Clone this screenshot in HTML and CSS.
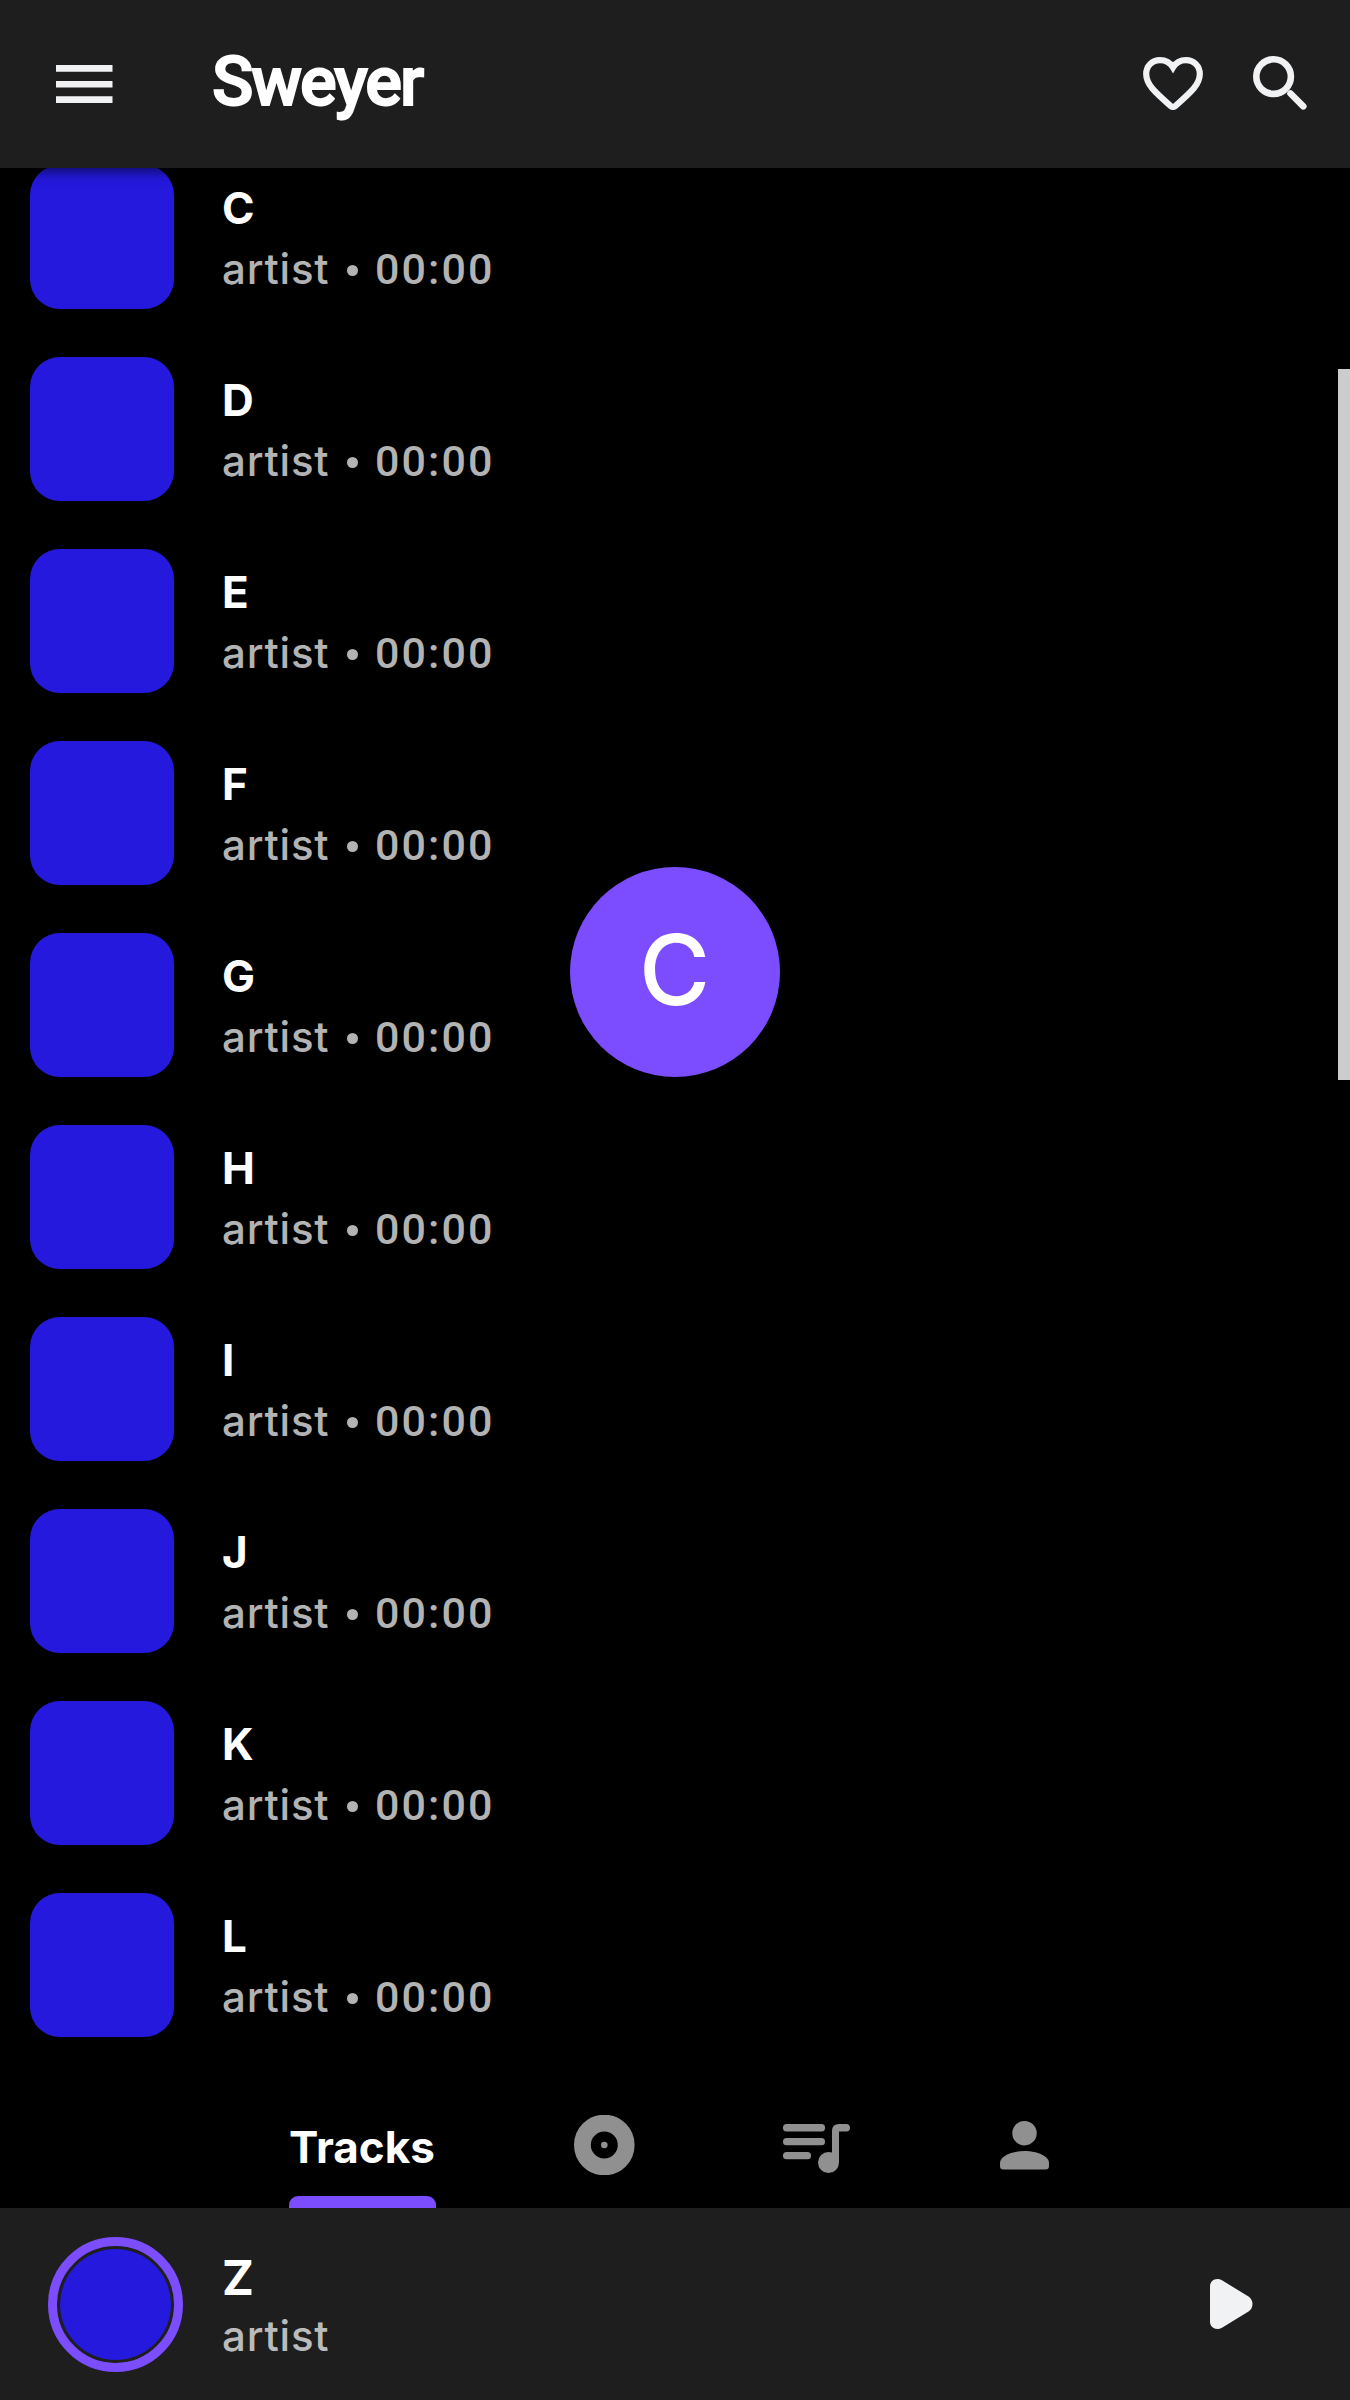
FILE: index.html
```
<!DOCTYPE html>
<html lang="en">
<head>
<meta charset="utf-8">
<title>Sweyer</title>
<link rel="stylesheet" href="styles.css">
</head>
<body>
<div class="app">
  <header class="appbar">
    <svg class="menu" viewBox="0 0 58 40" aria-label="Menu"><path d="M0 1h56.5v6.7H0zM0 17h56.5v6.4H0zM0 32.3h56.5V39H0z"/></svg>
    <h1 class="title">Sweyer</h1>
    <svg class="heart" viewBox="0 0 60 53" aria-label="Favorites"><path d="M30 10.5C27.3 6 22.5 3.200 17 3.200C9 3.200 3.200 9.200 3.200 17C3.200 27 11 34.500 27.500 48.800Q30 50.900 32.500 48.800C49 34.500 56.800 27 56.800 17C56.800 9.200 51 3.200 43 3.200C37.500 3.200 32.700 6 30 10.500Z"/></svg>
    <svg class="search" viewBox="0 0 54 54" aria-label="Search"><circle cx="20.600" cy="20.600" r="17.300"/><path d="M37.500 37.500L50.300 50.300"/></svg>
  </header>
  <main class="list">
    <ul class="tracks">
      <li class="track"><span class="art"></span><div class="info"><b class="name">C</b><span class="sub"><span class="artist">artist</span><i class="dot"></i><span class="time">00:00</span></span></div></li>
      <li class="track"><span class="art"></span><div class="info"><b class="name">D</b><span class="sub"><span class="artist">artist</span><i class="dot"></i><span class="time">00:00</span></span></div></li>
      <li class="track"><span class="art"></span><div class="info"><b class="name">E</b><span class="sub"><span class="artist">artist</span><i class="dot"></i><span class="time">00:00</span></span></div></li>
      <li class="track"><span class="art"></span><div class="info"><b class="name">F</b><span class="sub"><span class="artist">artist</span><i class="dot"></i><span class="time">00:00</span></span></div></li>
      <li class="track"><span class="art"></span><div class="info"><b class="name">G</b><span class="sub"><span class="artist">artist</span><i class="dot"></i><span class="time">00:00</span></span></div></li>
      <li class="track"><span class="art"></span><div class="info"><b class="name">H</b><span class="sub"><span class="artist">artist</span><i class="dot"></i><span class="time">00:00</span></span></div></li>
      <li class="track"><span class="art"></span><div class="info"><b class="name">I</b><span class="sub"><span class="artist">artist</span><i class="dot"></i><span class="time">00:00</span></span></div></li>
      <li class="track"><span class="art"></span><div class="info"><b class="name">J</b><span class="sub"><span class="artist">artist</span><i class="dot"></i><span class="time">00:00</span></span></div></li>
      <li class="track"><span class="art"></span><div class="info"><b class="name">K</b><span class="sub"><span class="artist">artist</span><i class="dot"></i><span class="time">00:00</span></span></div></li>
      <li class="track"><span class="art"></span><div class="info"><b class="name">L</b><span class="sub"><span class="artist">artist</span><i class="dot"></i><span class="time">00:00</span></span></div></li>
    </ul>
    <div class="scrollbar"></div>
    <div class="bubble">C</div>
  </main>
  <nav class="tabs">
    <div class="tab"><span class="tab-label">Tracks</span><span class="indicator"></span></div>
    <svg class="disc" viewBox="0 0 61 60" aria-label="Albums"><circle class="ring" cx="30.300" cy="30" r="21.900"/><circle cx="30.300" cy="30" r="3.300"/></svg>
    <svg class="queue" viewBox="0 0 67 49" aria-label="Playlists"><rect width="42" height="7.600" rx="3.500"/><rect y="14" width="42" height="7.300" rx="3.500"/><rect y="28" width="28" height="7.200" rx="3.500"/><path d="M49 28.500V7Q49 0 56 0H63.200A3.800 3.800 0 0 1 63.200 7.600H56V38.500A10.500 10.500 0 1 1 45.500 28Q47.500 28 49 28.500Z"/></svg>
    <svg class="person" viewBox="0 0 49 49" aria-label="Artists"><circle cx="24.500" cy="12.200" r="12.200"/><path d="M0 42C0 35 12 30 24.500 30S49 35 49 42V45Q49 48.500 45.500 48.500H3.500Q0 48.500 0 45Z"/></svg>
  </nav>
  <footer class="player">
    <div class="progress"><div class="cover"></div></div>
    <div class="now"><b class="now-name">Z</b><span class="now-artist">artist</span></div>
    <svg class="play" viewBox="0 0 43 50" aria-label="Play"><path d="M0 7.500C0 1 6.500-1.800 12 1.300L38.500 17.500Q42.500 20.500 42.500 25T38.500 32.500L12 48.700C6.500 51.800 0 49 0 42.500Z"/></svg>
  </footer>
</div>
</body>
</html>
```
FILE: styles.css
```
* { box-sizing: border-box; }
body { margin: 0; background: #000; }
svg { display: block; flex: none; }
.app {
  display: flex;
  flex-direction: column;
  width: 1350px;
  height: 2400px;
  overflow: hidden;
  color: #fff;
  font-family: Inter, "Liberation Sans", sans-serif;
}
.appbar {
  display: flex;
  align-items: flex-start;
  flex: none;
  height: 168px;
  padding-left: 56px;
  background: #1e1e1e;
  box-shadow: 0 3px 12px rgba(0, 0, 0, .6);
  z-index: 1;
}
.menu { width: 58px; height: 40px; margin-top: 64px; fill: #f1f2f4; }
.title {
  width: 240px;
  margin: 42px 0 0 98px;
  font: 500 68.5px/80px Roboto, sans-serif;
  letter-spacing: -2.1px;
  -webkit-text-stroke: 1.8px #fff;
}
.heart { width: 60px; height: 53px; margin: 57px 0 0 691px; fill: none; stroke: #f1f2f4; stroke-width: 6.2; }
.search { width: 54px; height: 54px; margin: 56px 0 0 49.600px; fill: none; stroke: #f1f2f4; stroke-width: 6.600; stroke-linecap: round; }
.list { position: relative; display: flow-root; flex: none; height: 1893px; }
.tracks { margin: -27px 0 0; padding: 0; list-style: none; }
.track { display: flex; align-items: center; height: 192px; padding-left: 30px; }
.art { width: 144px; height: 144px; border-radius: 30px; background: #2419dc; }
.info { display: flex; flex-direction: column; height: 144px; padding: 13px 0 0 48px; }
.name { height: 61px; font-size: 44px; line-height: 60px; font-weight: 650; }
.sub { display: flex; align-items: center; height: 60px; color: #b3b3b3; font-size: 42px; line-height: 60px; font-weight: 500; }
.artist { width: 125px; letter-spacing: .8px; }
.dot { width: 11px; height: 11px; margin-top: 2px; border-radius: 50%; background: currentColor; }
.time { margin-left: 17px; font-family: Roboto, sans-serif; font-size: 43px; letter-spacing: 2.1px; }
.scrollbar { position: absolute; right: 0; top: 201px; width: 12px; height: 711px; background: #ccc; }
.bubble {
  position: absolute;
  left: 570px;
  top: 699px;
  width: 210px;
  height: 210px;
  border-radius: 50%;
  background: #7c4dff;
  font-size: 97px;
  font-weight: 500;
  line-height: 206px;
  text-align: center;
  text-indent: -1px;
}
.tabs { display: flex; flex: none; height: 147px; padding-left: 289px; fill: #909090; }
.tab { display: flex; flex-direction: column; justify-content: space-between; width: 147px; height: 147px; padding-top: 56px; }
.tab-label { font-size: 44px; line-height: 60px; font-weight: 750; }
.indicator { height: 12px; border-radius: 9px 9px 0 0; background: #7c4dff; }
.disc { width: 61px; height: 60px; margin: 54px 0 0 138px; }
.ring { fill: none; stroke: #909090; stroke-width: 16.800; }
.queue { width: 67px; height: 49px; margin: 63px 0 0 148px; }
.person { width: 49px; height: 49px; margin: 60px 0 0 150px; }
.player { display: flex; flex: none; height: 192px; padding-left: 48px; background: #1e1e1e; }
.progress { width: 135px; height: 135px; margin-top: 28.500px; border: 9px solid #7c4dff; border-radius: 50%; padding: 3px; }
.cover { width: 111px; height: 111px; border-radius: 50%; background: #2419dc; }
.now { display: flex; flex-direction: column; width: 300px; margin: 40px 0 0 39px; }
.now-name { height: 58px; font-size: 48px; line-height: 60px; font-weight: 700; }
.now-artist { height: 60px; color: #bbb; font-size: 42px; line-height: 60px; font-weight: 500; letter-spacing: .8px; }
.play { width: 43px; height: 50px; margin: 71px 0 0 688px; fill: #f1f2f4; }
```
